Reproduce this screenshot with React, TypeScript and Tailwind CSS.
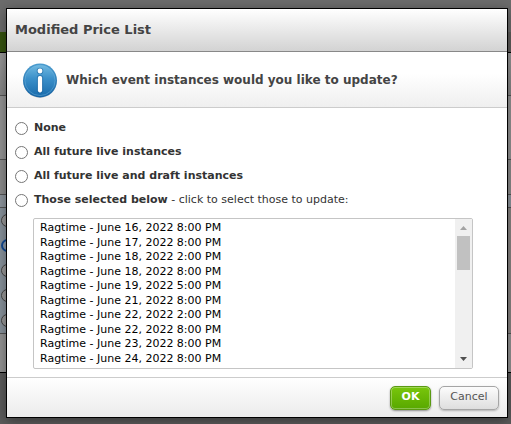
import React, { useState } from 'react';

const choices = [
  { id: 'none', label: 'None', hint: '' },
  { id: 'live', label: 'All future live instances', hint: '' },
  { id: 'draft', label: 'All future live and draft instances', hint: '' },
  { id: 'selected', label: 'Those selected below', hint: ' - click to select those to update:' }
];

const instances = [
  'Ragtime - June 16, 2022 8:00 PM',
  'Ragtime - June 17, 2022 8:00 PM',
  'Ragtime - June 18, 2022 2:00 PM',
  'Ragtime - June 18, 2022 8:00 PM',
  'Ragtime - June 19, 2022 5:00 PM',
  'Ragtime - June 21, 2022 8:00 PM',
  'Ragtime - June 22, 2022 2:00 PM',
  'Ragtime - June 22, 2022 8:00 PM',
  'Ragtime - June 23, 2022 8:00 PM',
  'Ragtime - June 24, 2022 8:00 PM'
];

const InfoIcon: React.FC = () => (
  <svg viewBox="0 0 36 36" className="h-9 w-9 shrink-0" aria-hidden="true">
    <defs>
      <linearGradient id="ball" x1="0" y1="0" x2="0" y2="1">
        <stop offset="0" stopColor="#6fb8e0" />
        <stop offset="0.45" stopColor="#3a8fc9" />
        <stop offset="1" stopColor="#1b6dad" />
      </linearGradient>
      <linearGradient id="rim" x1="0" y1="0" x2="0" y2="1">
        <stop offset="0" stopColor="#4a9ccf" />
        <stop offset="1" stopColor="#1664a5" />
      </linearGradient>
    </defs>
    <ellipse cx="18" cy="19.4" rx="16.6" ry="16.4" fill="#000" opacity="0.18" />
    <circle cx="18" cy="18.4" r="17" fill="url(#rim)" />
    <circle cx="18" cy="18.4" r="15.2" fill="url(#ball)" stroke="#7ebfe4" strokeWidth="0.8" strokeOpacity="0.5" />
    <circle cx="18" cy="9" r="3.3" fill="#1a5f9b" opacity="0.5" />
    <rect x="14.9" y="13" width="6.2" height="18.2" rx="2.8" fill="#1a5f9b" opacity="0.5" />
    <circle cx="18" cy="9" r="2.4" fill="#fff" />
    <rect x="15.9" y="14" width="4.2" height="16.400" rx="1.8" fill="#fff" />
  </svg>
);

// Dimmed page that stays visible around the dialog
const Backdrop: React.FC = () => (
  <div aria-hidden="true" className="flex min-h-screen flex-col bg-[#5c5c5c]">
    <div className="h-8 bg-[#6c6c6c]" />
    <div className="flex h-5">
      <div className="w-1/2 bg-[#35530f]" />
      <div className="flex-1 bg-[#605e5c]" />
    </div>
    <div className="h-[43px] border-t border-black bg-linear-to-b from-[#9a9a9a] to-[#858585]" />
    <div className="h-16 border-t border-[#555] bg-[#959595]" />
    <div className="h-9 border-y border-[#555] bg-[#8d8d8d]" />
    <div className="h-3 bg-[#8f979e]" />
    <div className="flex flex-col border-t border-[#555] bg-linear-to-r from-[#89939c] from-50% to-[#8b8785] to-50%">
      {[0, 1, 2, 3, 4].map((row) => (
        <div key={row} className="flex h-[25px] items-center pl-px">
          <span
            className={
              row === 1
                ? 'h-[13px] w-[13px] rounded-full border-2 border-[#114a94] bg-[#8a9aaa]'
                : 'h-[13px] w-[13px] rounded-full border border-[#444] bg-[#999]'
            }
          />
        </div>
      ))}
    </div>
    <div className="h-10 border-y border-[#555] border-b-black bg-[#959595]" />
  </div>
);

const App: React.FC = () => {
  const [choice, setChoice] = useState('');
  const [selected, setSelected] = useState<string[]>([]);

  return (
    <div className="relative min-h-screen overflow-hidden font-['Verdana','DejaVu_Sans',sans-serif] text-[11px] text-[#333]">
      <Backdrop />

      <div className="absolute inset-0 pt-2 pr-[3px] pl-1.5">
        <div
          role="dialog"
          aria-labelledby="dialog-title"
          className="flex flex-col border border-black bg-white shadow-[0_3px_12px_rgba(0,0,0,0.4)]"
        >
          <header className="flex h-[43px] items-center border-b border-[#888] bg-linear-to-b from-white to-[#d3d3d3] px-2">
            <h1 id="dialog-title" className="text-[13px] leading-4 font-bold text-[#444]">Modified Price List</h1>
          </header>

          <div className="flex h-14 items-center gap-2 border-b border-[#ccc] bg-linear-to-b from-white from-40% to-[#efefef] px-[15px]">
            <InfoIcon />
            <h2 className="text-[12px] leading-4 font-bold text-[#444]">Which event instances would you like to update?</h2>
          </div>

          <div className="px-2 py-2">
            {choices.map((item) => (
              <label key={item.id} className="flex h-6 items-center gap-1.5">
                <input
                  type="radio"
                  name="instances"
                  value={item.id}
                  checked={choice === item.id}
                  onChange={() => setChoice(item.id)}
                  className="h-[13px] w-[13px] shrink-0"
                />
                <span className="leading-4 whitespace-pre">
                  <b>{item.label}</b>
                  {item.hint}
                </span>
              </label>
            ))}

            <div className="mt-1.5 mr-[26px] ml-[18px] flex h-[151px] rounded-[2px] border border-[#c5c5c5]">
              <select
                multiple
                size={10}
                aria-label="Event instances"
                value={selected}
                onChange={(e) => setSelected(Array.from(e.target.selectedOptions, (o) => o.value))}
                className="min-w-0 flex-1 overflow-hidden py-0.5 pl-1 text-[11px] text-black outline-none [scrollbar-width:none]"
              >
                {instances.map((name) => (
                  <option key={name} value={name} className="px-0.5 py-0 leading-[14px] odd:h-[15px] even:h-[14px]">{name}</option>
                ))}
              </select>
              <div aria-hidden="true" className="flex w-[17px] flex-col items-center bg-[#f0f0f0]">
                <svg viewBox="0 0 17 17" className="h-[17px] w-[17px]">
                  <path d="M5 11h7L8.500 7z" fill="#a3a3a3" />
                </svg>
                <div className="h-[34px] w-[13px] bg-[#c1c1c1]" />
                <svg viewBox="0 0 17 17" className="mt-auto h-[17px] w-[17px]">
                  <path d="M5 6h7l-3.500 4z" fill="#505050" />
                </svg>
              </div>
            </div>
          </div>

          <footer className="flex h-10 items-center justify-end gap-2 border-t border-[#ccc] bg-linear-to-b from-white to-[#ebebeb] px-2">
            <button
              type="button"
              className="h-6 w-[41px] rounded-[5px] border border-[#5a9a12] bg-linear-to-b from-[#79c60c] to-[#58a800] font-bold text-white shadow-[0_1px_2px_rgba(0,0,0,0.4),inset_0_0_0_1px_rgba(255,255,255,0.3)]"
            >
              OK
            </button>
            <button
              type="button"
              className="h-6 w-[60px] rounded-[5px] border border-[#a5a5a5] bg-linear-to-b from-[#fcfcfc] to-[#dedede] text-[#555] shadow-[0_1px_2px_rgba(0,0,0,0.25)]"
            >
              Cancel
            </button>
          </footer>
        </div>
      </div>
    </div>
  );
};

export default App;
